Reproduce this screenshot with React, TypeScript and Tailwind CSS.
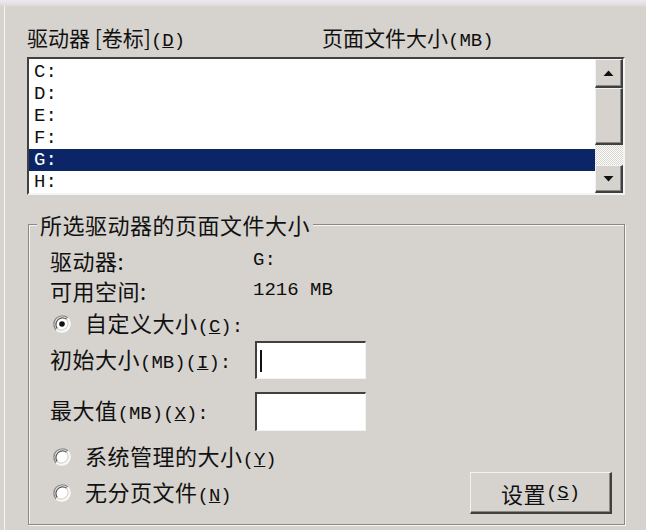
import type { ReactNode } from "react";

const L = ({ children }: { children: ReactNode }) => (
  <span className="font-['Liberation_Mono',monospace] text-[19px] tracking-normal text-[#0e0e0e]">{children}</span>
);

const Radio = ({ checked }: { checked?: boolean }) => (
  <svg width="18" height="18" viewBox="0 0 18 18" className="shrink-0">
    <circle cx="9" cy="9" r="8.5" fill="#ffffff" />
    <path d="M3 15 A8.5 8.5 0 0 1 15 3" fill="none" stroke="#8a8884" strokeWidth="1.4" />
    <path d="M4.3 13.7 A6.7 6.7 0 0 1 13.7 4.3" fill="none" stroke="#5a5854" strokeWidth="1.3" />
    <path d="M15 3 A8.5 8.5 0 0 1 3 15" fill="none" stroke="#f4f4f4" strokeWidth="1.4" />
    <path d="M13.7 4.3 A6.7 6.7 0 0 1 4.3 13.7" fill="none" stroke="#d6d3ce" strokeWidth="1.3" />
    {checked && <circle cx="9" cy="9" r="2.8" fill="#111111" />}
  </svg>
);

const Arrow = ({ down }: { down?: boolean }) => (
  <svg width="11" height="7" viewBox="0 0 11 7">
    <path d={down ? "M0.5 1 L10.5 1 L5.5 6.5 Z" : "M0.5 6 L10.5 6 L5.5 0.5 Z"} fill="#111111" />
  </svg>
);

const drives = ["C:", "D:", "E:", "F:", "G:", "H:"];

const Raised = "bg-[#d6d3ce] border-t border-l border-[#f2f2f2] border-r-2 border-b-2 border-r-[#404040] border-b-[#404040] shadow-[inset_-1px_-1px_0_#8a8884]";

const Sunken = "bg-white border-t-2 border-l-2 border-t-[#404040] border-l-[#404040] border-r border-b border-r-[#f4f4f4] border-b-[#f4f4f4]";

export default function App() {
  return (
    <div className="w-[646px] h-[530px] overflow-hidden bg-[#d6d3ce] flex flex-col text-[#111111] font-['Noto_Sans_CJK_SC',sans-serif] text-[21px] leading-[24px]">
      <div className="h-[6px] shrink-0 bg-gradient-to-b from-[#eceaf0] to-[#dddbd8]" />
      <div className="flex-1 ml-[4px] border-l border-[#f4f4f4] pl-[22px] pr-[21px] flex flex-col">
        {/* column headers */}
        <div className="mt-[19px] h-[24px] flex">
          <div className="w-[295px]">
            驱动器 [卷标]<L>(<u>D</u>)</L>
          </div>
          <div>
            页面文件大小<L>(MB)</L>
          </div>
        </div>

        {/* drive list */}
        <div className="mt-[8px] h-[138px] flex border-t-2 border-l-2 border-t-[#404040] border-l-[#404040] border-r-2 border-b-2 border-r-[#f4f4f4] border-b-[#f4f4f4] bg-white">
          <div className="flex-1 pt-[2px] font-['Liberation_Mono',monospace] text-[19px]">
            {drives.map((d) => (
              <div
                key={d}
                className={
                  d === "G:"
                    ? "h-[22px] pl-[5px] leading-[22px] bg-[#0c2566] text-white"
                    : "h-[22px] pl-[5px] leading-[22px]"
                }
              >
                {d}
              </div>
            ))}
          </div>
          <div className="w-[28px] flex flex-col">
            <div className={`h-[29px] flex items-center justify-center ${Raised}`}>
              <Arrow />
            </div>
            <div className={`h-[57px] ${Raised}`} />
            <div className="flex-1 bg-[repeating-conic-gradient(#ffffff_0_25%,#d6d3ce_0_50%)] bg-[length:2px_2px]" />
            <div className={`h-[28px] flex items-center justify-center ${Raised}`}>
              <Arrow down />
            </div>
          </div>
        </div>

        {/* group box */}
        <fieldset className="mt-[17px] ml-[1px] h-[313px] border border-[#8a8884] shadow-[inset_1px_1px_0_#f4f4f4,1px_1px_0_#f4f4f4] pl-[21px] pr-[12px] pt-[9px] flex flex-col text-[22px] tracking-[0.5px]">
          <legend className="-ml-[13px] px-[3px] bg-[#d6d3ce]">所选驱动器的页面文件大小</legend>

          <div className="h-[30px] flex items-center">
            <div className="w-[203px]">驱动器:</div>
            <L>G:</L>
          </div>
          <div className="h-[30px] flex items-center">
            <div className="w-[203px]">可用空间:</div>
            <L>1216 MB</L>
          </div>
          <div className="mt-[4px] h-[30px] flex items-center pl-[3px] gap-[14px]">
            <Radio checked />
            <span>
              自定义大小<L>(<u>C</u>):</L>
            </span>
          </div>
          <div className="mt-[2px] h-[38px] flex items-center">
            <div className="w-[205px]">
              初始大小<L>(MB)(<u>I</u>):</L>
            </div>
            <div className={`w-[111px] h-[38px] flex items-center pl-[3px] ${Sunken}`}>
              <div className="w-[2px] h-[22px] bg-[#111111]" />
            </div>
          </div>
          <div className="mt-[13px] h-[39px] flex items-center">
            <div className="w-[205px]">
              最大值<L>(MB)(<u>X</u>):</L>
            </div>
            <div className={`w-[111px] h-[39px] ${Sunken}`} />
          </div>
          <div className="mt-[14px] h-[24px] flex items-center pl-[3px] gap-[14px]">
            <Radio />
            <span>
              系统管理的大小<L>(<u>Y</u>)</L>
            </span>
          </div>
          <div className="mt-[3px] h-[42px] flex items-center justify-between">
            <div className="flex items-center pl-[3px] gap-[14px]">
              <Radio />
              <span>
                无分页文件<L>(<u>N</u>)</L>
              </span>
            </div>
            <button className={`w-[142px] h-[42px] flex items-center justify-center ${Raised}`}>
              设置<L>(<u>S</u>)</L>
            </button>
          </div>
        </fieldset>
      </div>
    </div>
  );
}
